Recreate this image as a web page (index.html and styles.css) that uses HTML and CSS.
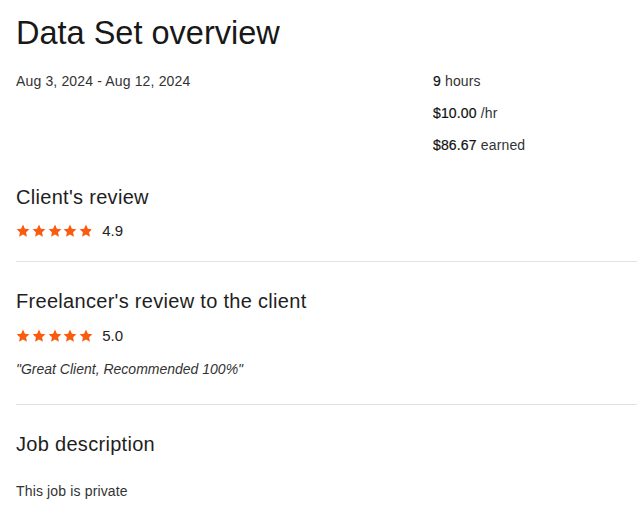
FILE: index.html
```html
<!DOCTYPE html>
<html>
<head>
    <meta charset="utf-8" />
    <title>Data Set overview</title>
    <link rel="stylesheet" href="styles.css">
</head>
<body>
    <div class="page">
        <h1 class="title">Data Set overview</h1>

        <div class="summary">
            <div class="dates">Aug 3, 2024 - Aug 12, 2024</div>
            <ul class="stats">
                <li><b>9</b> hours</li>
                <li><b>$10.00</b> /hr</li>
                <li><b>$86.67</b> earned</li>
            </ul>
        </div>

        <!-- feedback left by the client -->
        <section class="review review-first">
            <h2 class="section-title">Client's review</h2>
            <div class="rating">
                <span class="stars">
                    <svg class="star" viewBox="0 0 24 24"><path d="M12 1L15.23 8.05 22.94 8.95 17.23 14.2 18.76 21.8 12 18 5.24 21.8 6.77 14.2 1.06 8.95 8.77 8.05z"/></svg>
                    <svg class="star" viewBox="0 0 24 24"><path d="M12 1L15.23 8.05 22.94 8.95 17.23 14.2 18.76 21.8 12 18 5.24 21.8 6.77 14.2 1.06 8.95 8.77 8.05z"/></svg>
                    <svg class="star" viewBox="0 0 24 24"><path d="M12 1L15.23 8.05 22.94 8.95 17.23 14.2 18.76 21.8 12 18 5.24 21.8 6.77 14.2 1.06 8.95 8.77 8.05z"/></svg>
                    <svg class="star" viewBox="0 0 24 24"><path d="M12 1L15.23 8.05 22.94 8.95 17.23 14.2 18.76 21.8 12 18 5.24 21.8 6.77 14.2 1.06 8.95 8.77 8.05z"/></svg>
                    <svg class="star" viewBox="0 0 24 24">
                        <defs><clipPath id="part49"><rect x="0" y="0" width="21" height="24"/></clipPath></defs>
                        <path clip-path="url(#part49)" d="M12 1L15.23 8.05 22.94 8.95 17.23 14.2 18.76 21.8 12 18 5.24 21.8 6.77 14.2 1.06 8.95 8.77 8.05z"/>
                    </svg>
                </span>
                <span class="score">4.9</span>
            </div>
        </section>

        <hr class="divider">

        <!-- feedback given to the client -->
        <section class="review">
            <h2 class="section-title">Freelancer's review to the client</h2>
            <div class="rating rating-given">
                <span class="stars">
                    <svg class="star" viewBox="0 0 24 24"><path d="M12 1L15.23 8.05 22.94 8.95 17.23 14.2 18.76 21.8 12 18 5.24 21.8 6.77 14.2 1.06 8.95 8.77 8.05z"/></svg>
                    <svg class="star" viewBox="0 0 24 24"><path d="M12 1L15.23 8.05 22.94 8.95 17.23 14.2 18.76 21.8 12 18 5.24 21.8 6.77 14.2 1.06 8.95 8.77 8.05z"/></svg>
                    <svg class="star" viewBox="0 0 24 24"><path d="M12 1L15.23 8.05 22.94 8.95 17.23 14.2 18.76 21.8 12 18 5.24 21.8 6.77 14.2 1.06 8.95 8.77 8.05z"/></svg>
                    <svg class="star" viewBox="0 0 24 24"><path d="M12 1L15.23 8.05 22.94 8.95 17.23 14.2 18.76 21.8 12 18 5.24 21.8 6.77 14.2 1.06 8.95 8.77 8.05z"/></svg>
                    <svg class="star" viewBox="0 0 24 24"><path d="M12 1L15.23 8.05 22.94 8.95 17.23 14.2 18.76 21.8 12 18 5.24 21.8 6.77 14.2 1.06 8.95 8.77 8.05z"/></svg>
                </span>
                <span class="score">5.0</span>
            </div>
            <p class="quote">"Great Client, Recommended 100%"</p>
        </section>

        <hr class="divider divider-after-quote">

        <section class="job">
            <h2 class="section-title">Job description</h2>
            <p class="job-text">This job is private</p>
        </section>
    </div>
</body>
</html>
```

FILE: styles.css
```css
* {
    padding: 0;
    margin: 0;
    box-sizing: border-box;
}

body {
    background: #fff;
    color: #1e1e1e;
    font-family: "Liberation Sans", Arial, sans-serif;
}

.page {
    padding: 15px 0 0 16px;
}

.title {
    font-size: 32.5px;
    line-height: 37px;
    font-weight: 400;
    color: #181818;
}

.summary {
    display: grid;
    grid-template-columns: 417px 1fr;
    margin-top: 19px;
    font-size: 14px;
    line-height: 20px;
    letter-spacing: 0.15px;
    color: #333;
}

.stats {
    list-style: none;
    display: flex;
    flex-direction: column;
    gap: 12px;
}

.stats b {
    font-weight: 400;
    color: #111;
    -webkit-text-stroke: 0.2px #111;
}

.review-first {
    margin-top: 30px;
}

.section-title {
    font-size: 20px;
    line-height: 24px;
    font-weight: 400;
    letter-spacing: 0.3px;
    color: #1e1e1e;
}

.rating {
    display: flex;
    align-items: center;
    height: 20px;
    margin-top: 12px;
}

.rating-given {
    margin-top: 13px;
}

.stars {
    display: flex;
    gap: 1.8px;
}

.star {
    width: 14px;
    height: 14px;
    fill: #fa5b0f;
}

.score {
    margin-left: 9px;
    font-size: 15px;
    line-height: 20px;
    color: #222;
}

.quote {
    margin-top: 14px;
    font-size: 14px;
    line-height: 18px;
    font-style: italic;
    color: #333;
}

.divider {
    border: 0;
    border-top: 1px solid #dfe3e8;
    margin-top: 20px;
}

.divider-after-quote {
    margin-top: 26px;
}

.divider + .review,
.divider + .job {
    margin-top: 27px;
}

.job-text {
    margin-top: 25px;
    font-size: 14px;
    line-height: 20px;
    letter-spacing: 0.15px;
    color: #333;
}
```
